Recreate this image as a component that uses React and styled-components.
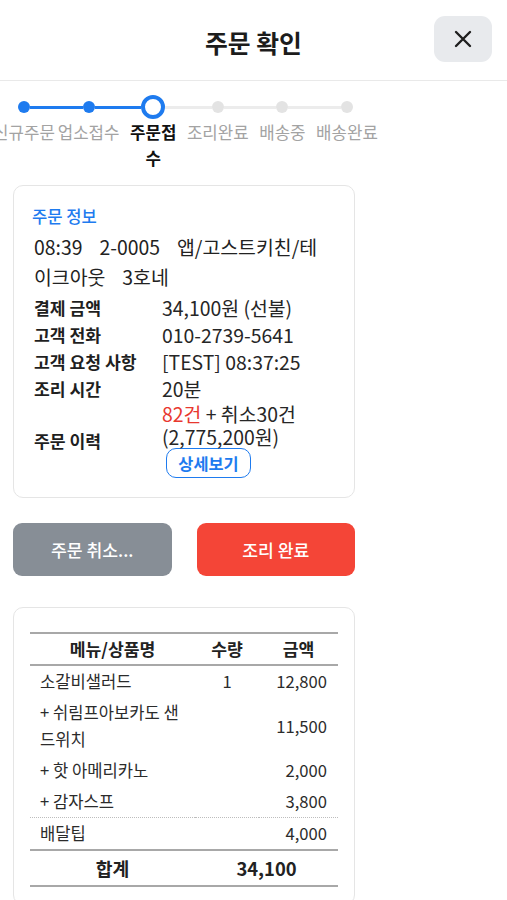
import React from 'react';
import styled, { createGlobalStyle, css } from 'styled-components';

const GlobalStyle = createGlobalStyle`
  html, body { margin: 0; padding: 0; background: #ffffff; }
  body {
    font-family: "Noto Sans CJK KR", "Noto Sans", sans-serif;
    color: #222;
    -webkit-font-smoothing: antialiased;
  }
  * { box-sizing: border-box; }
`;

const BLUE = '#1e7bef';

const Page = styled.div`
  width: 507px;
  overflow: hidden;
`;

const Header = styled.header`
  display: grid;
  grid-template-columns: 1fr auto 1fr;
  align-items: center;
  height: 81px;
  padding: 0 15px 1px;
  border-bottom: 1px solid #e9e9e9;
`;

const Title = styled.h1`
  grid-column: 2;
  margin: 4px 0 0;
  font-size: 24.8px;
  font-weight: 700;
  color: #1c1c1c;
`;

const CloseButton = styled.button`
  grid-column: 3;
  justify-self: end;
  width: 58px;
  height: 46px;
  border: none;
  border-radius: 11px;
  background: #e8eaed;
  display: flex;
  align-items: center;
  justify-content: center;
  padding: 0;
  margin-top: -1px;
`;

const Content = styled.main`
  width: 368px;
  padding: 0 13px;
`;

const Stepper = styled.ol`
  list-style: none;
  margin: 14px 0 0 -21.3px;
  padding: 0;
  display: grid;
  grid-template-columns: repeat(6, 64.6px);
`;

const Step = styled.li`
  display: flex;
  flex-direction: column;
  align-items: center;
`;

const Track = styled.div`
  width: 100%;
  height: 24px;
  display: flex;
  align-items: center;
`;

const Half = styled.span`
  flex: 1;
  height: 3px;
  background: ${(p) => (p.$hidden ? 'transparent' : p.$on ? BLUE : '#ececec')};
`;

const Dot = styled.span`
  flex: none;
  border-radius: 50%;
  ${(p) =>
    p.$state === 'current'
      ? css`
          width: 24px;
          height: 24px;
          border: 4.5px solid ${BLUE};
          background: #fff;
        `
      : css`
          width: 12px;
          height: 12px;
          background: ${p.$state === 'done' ? BLUE : '#e3e3e3'};
        `}
`;

const StepLabel = styled.span`
  font-size: 16.8px;
  line-height: 26px;
  text-align: center;
  white-space: nowrap;
  color: #a3a3a3;
  ${(p) =>
    p.$active &&
    css`
      white-space: normal;
      max-width: 54px;
      color: #111;
      font-weight: 700;
    `}
`;

const Card = styled.section`
  border: 1px solid #e5e5e5;
  border-radius: 10px;
  background: #fff;
`;

const InfoCard = styled(Card)`
  margin-top: 14px;
  padding: 19px 18px 19px 18px;
`;

const CardTitle = styled.h2`
  margin: 0;
  font-size: 16.6px;
  line-height: 22px;
  font-weight: 500;
  color: ${BLUE};
`;

const InfoBody = styled.div`
  padding-left: 2px;
`;

const Address = styled.p`
  margin: 5px 0 2px;
  padding-right: 10px;
  font-size: 19.4px;
  line-height: 30px;
  color: #222;
`;

const Seg = styled.span`
  & + & {
    margin-left: 17px;
  }
`;

const Row = styled.div`
  display: grid;
  grid-template-columns: 128px 1fr;
  align-items: center;
  min-height: 27px;
`;

const Label = styled.span`
  font-size: 17.2px;
  line-height: 27px;
  font-weight: 700;
  color: #1f1f1f;
  white-space: nowrap;
`;

const Value = styled.div`
  font-size: 19.4px;
  line-height: ${(p) => (p.$tight ? '23px' : '27px')};
  color: #262626;
`;

const Red = styled.span`
  color: #e8382f;
`;

const DetailButton = styled.button`
  display: block;
  margin: 0 0 0 4px;
  width: 85px;
  height: 30px;
  border: 1.5px solid ${BLUE};
  border-radius: 10px;
  background: #fff;
  color: ${BLUE};
  font-family: inherit;
  font-size: 16.4px;
  font-weight: 700;
  padding: 0;
`;

const Actions = styled.div`
  display: grid;
  grid-template-columns: 1fr 1fr;
  gap: 25px;
  margin: 25px 0 31px;
`;

const ActionButton = styled.button`
  height: 53px;
  border: none;
  border-radius: 9px;
  background: ${(p) => (p.$variant === 'danger' ? '#f44537' : '#878e96')};
  color: #fff;
  font-family: inherit;
  font-size: 17.2px;
  font-weight: 500;
  padding: 0;
`;

const TableCard = styled(Card)`
  padding: 24px 16px 17px;
`;

const Table = styled.table`
  width: 100%;
  border-collapse: collapse;
  table-layout: fixed;
  color: #2b2b2b;
`;

const Th = styled.th`
  font-size: 17.2px;
  font-weight: 700;
  line-height: 22px;
  padding: 4px 0;
  text-align: center;
  border-top: 2px solid #a8a8a8;
  border-bottom: 2px solid #a8a8a8;
  color: #222;
`;

const Tr = styled.tr`
  ${(p) =>
    p.$dotted &&
    css`
      & > td {
        border-bottom: 1px dotted #bdbdbd;
      }
    `}
`;

const Td = styled.td`
  font-size: 16.6px;
  line-height: 27px;
  padding: 2px 6px 2px 10px;
  text-align: ${(p) => p.$align || 'left'};
  vertical-align: middle;
  ${(p) => p.$align === 'right' && css`padding-right: 11px;`}
  ${(p) => p.$align === 'center' && css`padding: 2px 0;`}
`;

const TotalRow = styled.tr`
  & > td {
    border-top: 2px solid #a8a8a8;
    border-bottom: 2px solid #a8a8a8;
    padding: 4px 0;
    line-height: 26px;
    font-weight: 700;
    text-align: center;
    color: #222;
  }
`;

const TotalLabel = styled.td`
  font-size: 18.2px;
`;

const TotalValue = styled.td`
  font-size: 18.4px;
`;

const steps = ['신규주문', '업소접수', '주문접수', '조리완료', '배송중', '배송완료'];
const ACTIVE = 2;

const items = [
  { name: '소갈비샐러드', qty: '1', price: '12,800' },
  { name: '+ 쉬림프아보카도 샌드위치', qty: '', price: '11,500' },
  { name: '+ 핫 아메리카노', qty: '', price: '2,000' },
  { name: '+ 감자스프', qty: '', price: '3,800', dotted: true },
  { name: '배달팁', qty: '', price: '4,000' },
];

const infoRows = [
  ['결제 금액', '34,100원 (선불)'],
  ['고객 전화', '010-2739-5641'],
  ['고객 요청 사항', '[TEST] 08:37:25'],
  ['조리 시간', '20분'],
];

function CloseIcon() {
  return (
    <svg width="18" height="18" viewBox="0 0 18 18" fill="none">
      <path d="M2 2L16 16M16 2L2 16" stroke="#1f1f1f" strokeWidth="2.4" strokeLinecap="round" />
    </svg>
  );
}

export default function App() {
  return (
    <Page>
      <GlobalStyle />
      <Header>
        <Title>주문 확인</Title>
        <CloseButton aria-label="닫기">
          <CloseIcon />
        </CloseButton>
      </Header>
      <Content>
        <Stepper>
          {steps.map((s, i) => (
            <Step key={s}>
              <Track>
                <Half $on={i <= ACTIVE} $hidden={i === 0} />
                <Dot $state={i < ACTIVE ? 'done' : i === ACTIVE ? 'current' : 'todo'} />
                <Half $on={i < ACTIVE} $hidden={i === steps.length - 1} />
              </Track>
              <StepLabel $active={i === ACTIVE}>{s}</StepLabel>
            </Step>
          ))}
        </Stepper>

        <InfoCard>
          <CardTitle>주문 정보</CardTitle>
          <InfoBody>
            <Address>
              <Seg>08:39</Seg>
              <Seg>2-0005</Seg>
              <Seg>앱/고스트키친/테이크아웃</Seg>
              <Seg>3호네</Seg>
            </Address>
            {infoRows.map(([l, v]) => (
              <Row key={l}>
                <Label>{l}</Label>
                <Value>{v}</Value>
              </Row>
            ))}
            <Row>
              <Label>주문 이력</Label>
              <Value $tight>
                <div>
                  <Red>82건</Red> + 취소30건
                </div>
                <div>(2,775,200원)</div>
                <DetailButton>상세보기</DetailButton>
              </Value>
            </Row>
          </InfoBody>
        </InfoCard>

        <Actions>
          <ActionButton>주문 취소...</ActionButton>
          <ActionButton $variant="danger">조리 완료</ActionButton>
        </Actions>

        <TableCard>
          <Table>
            <colgroup>
              <col style={{ width: '165px' }} />
              <col style={{ width: '64px' }} />
              <col />
            </colgroup>
            <thead>
              <tr>
                <Th>메뉴/상품명</Th>
                <Th>수량</Th>
                <Th>금액</Th>
              </tr>
            </thead>
            <tbody>
              {items.map((it) => (
                <Tr key={it.name} $dotted={it.dotted}>
                  <Td>{it.name}</Td>
                  <Td $align="center">{it.qty}</Td>
                  <Td $align="right">{it.price}</Td>
                </Tr>
              ))}
              <TotalRow>
                <TotalLabel>합계</TotalLabel>
                <TotalValue colSpan={2}>34,100</TotalValue>
              </TotalRow>
            </tbody>
          </Table>
        </TableCard>
      </Content>
    </Page>
  );
}
